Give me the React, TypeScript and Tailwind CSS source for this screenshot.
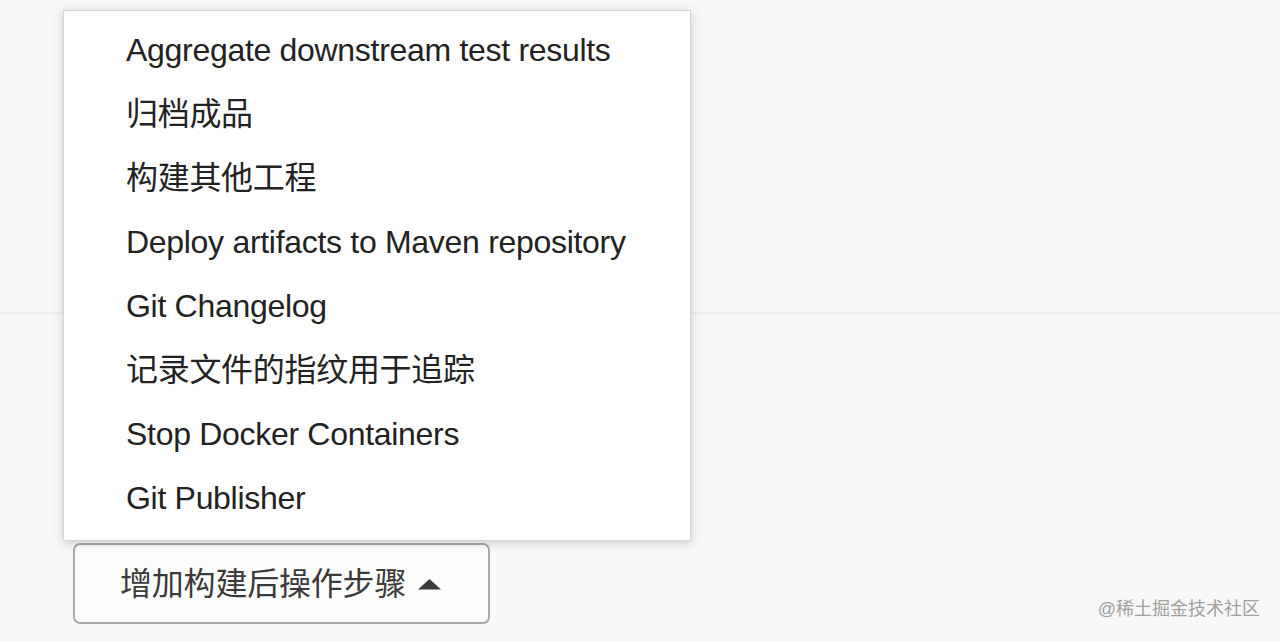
import React from "react";

const items = [
  "Aggregate downstream test results",
  "归档成品",
  "构建其他工程",
  "Deploy artifacts to Maven repository",
  "Git Changelog",
  "记录文件的指纹用于追踪",
  "Stop Docker Containers",
  "Git Publisher",
];

const font = { fontFamily: '"Liberation Sans", "Noto Sans CJK SC", sans-serif' };

export default function App() {
  return (
    <div
      className="relative h-[641px] w-[1280px] overflow-hidden bg-[#f8f8f8]"
      style={font}
    >
      <div className="h-[314px] border-b-2 border-[#efefef]" />
      <div className="pl-[73px] pt-[229px]">
        <button className="flex h-[81px] w-[417px] items-center rounded-[7px] border-2 border-[#a3abb0] bg-[#fdfdfd] pl-[45px] text-[32px] tracking-[-0.2px] text-[#3a3a3a]">
          <span>增加构建后操作步骤</span>
          <svg width="23" height="11" viewBox="0 0 23 11" className="ml-[12px] mt-[2px]">
            <polygon points="11.5,0 23,10.5 0,10.5" fill="#3a3a3a" />
          </svg>
        </button>
      </div>
      <div className="absolute left-[63px] top-[10px] w-[628px] h-[531px] border border-[#d4d4d4] bg-white pt-[7px] shadow-[0_2px_10px_rgba(0,0,0,0.18)]">
        {items.map((t) => (
          <div key={t} className="flex h-[64px] items-center pl-[62px] text-[32px] tracking-[-0.3px] text-[#222]">
            {t}
          </div>
        ))}
      </div>
      <div className="absolute right-[20px] bottom-[18px] text-[18px] text-[#a0a0a0]">
        @稀土掘金技术社区
      </div>
    </div>
  );
}
